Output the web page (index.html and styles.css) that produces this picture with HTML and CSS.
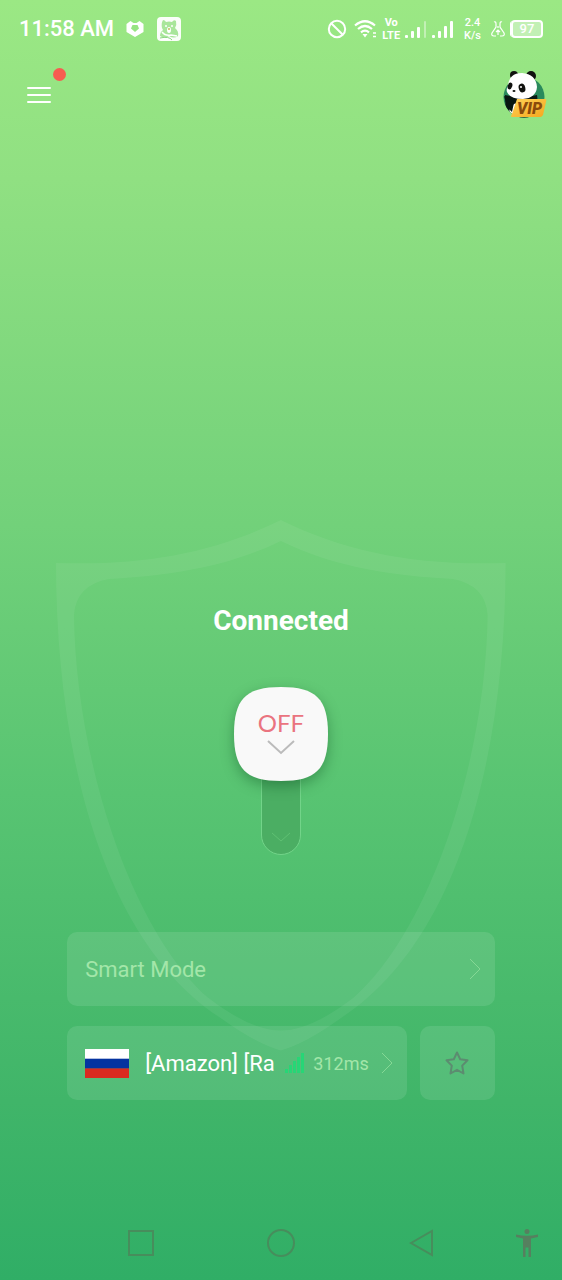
FILE: index.html
```html
<!DOCTYPE html>
<html lang="en">
  <head>
    <meta charset="UTF-8" />
    <meta name="viewport" content="width=device-width, initial-scale=1.0" />
    <title>Panda VPN</title>
    <link rel="stylesheet" href="styles.css">
  </head>
  <body>
    <div class="status-bar">
      <span class="clock">11:58 AM</span>
      <svg class="status-app" width="18" height="16" viewBox="0 0 18 16">
        <path d="M4.500 0 L7.500 2 H10.500 L13.500 0 L17.500 3 V11 L9 16 L0.500 11 V3 Z" fill="#fff" />
        <path d="M6.500 4 H11.500 L13 7.500 L9 11 L5 7.500 Z" fill="#97e482" />
      </svg>
      <svg class="status-cat" width="24" height="24" viewBox="0 0 24 24">
        <rect width="24" height="24" rx="4" fill="#fff" opacity="0.95" />
        <path d="M5 11 Q4 6 6 3 Q8 3 9 5 Q12 4 15 5 Q17 2 19 4 Q20 8 18 11 Q22 14 21 19 Q17 22 12 19 Q8 22 3 19 Q3 15 6 13 Z" fill="#a9e69b" />
        <path d="M5 15 Q8 19 14 18 L20 19 M3 22 H14" fill="none" stroke="#fff" stroke-width="1.500" />
        <path d="M3 21 Q12 19 15 23" fill="none" stroke="#8bd681" stroke-width="1" />
        <circle cx="9" cy="9" r="1" fill="#fff" />
        <circle cx="15" cy="9" r="1" fill="#fff" />
        <ellipse cx="12" cy="13" rx="2" ry="3" fill="#fff" />
        <circle cx="12" cy="12" r="1" fill="#c5bd5e" />
      </svg>

      <div class="status-right">
        <svg width="20" height="20" viewBox="0 0 20 20" fill="none" stroke="#fff" stroke-width="2">
          <circle cx="10" cy="10" r="8.200" />
          <path d="M4.200 4.200 L15.800 15.800" />
        </svg>
        <svg class="wifi" width="24" height="20" viewBox="0 0 24 20" fill="none" stroke="#fff" stroke-width="2.200">
          <path d="M1 6.500 Q11 -2 21 6.500 M4 10 Q11 4 18 10 M7 13.300 Q11 10 15 13.300" />
          <path d="M8.500 15 H13.500 L11 18.500 Z" fill="#fff" stroke="none" />
          <path d="M19 14 H22 M19 17.500 H22" stroke-width="1.300" />
        </svg>
        <span class="two-line lte"><span>Vo</span><span>LTE</span></span>
        <svg class="bars" width="22" height="18" viewBox="0 0 22 18" fill="#fff">
          <rect y="15" width="3" height="3" rx="1" />
          <rect x="6" y="11" width="3" height="7" rx="1" />
          <rect x="12" y="7" width="3" height="11" rx="1" />
          <rect x="19" y="1" width="2" height="17" rx="1" opacity="0.4" />
        </svg>
        <svg class="bars" width="22" height="18" viewBox="0 0 22 18" fill="#fff">
          <rect y="15" width="3" height="3" rx="1" />
          <rect x="6" y="11" width="3" height="7" rx="1" />
          <rect x="12" y="6" width="3" height="12" rx="1" />
          <rect x="18" y="1" width="3" height="17" rx="1" />
        </svg>
        <span class="two-line speed"><span>2.4</span><span>K/s</span></span>
        <svg class="flask" width="14" height="16" viewBox="0 0 14 16" fill="none" stroke="#fff" stroke-width="1.200">
          <path d="M3 1 Q5 0 5 3 V6 L1 12 Q0 15 3 15 H5 M11 1 Q9 0 9 3 V6 L13 12 Q14 15 11 15 H9 M7 5 V7 M5 11 L7 9 L9 11 M7 9 V14" />
        </svg>
        <div class="battery">97</div>
      </div>
    </div>

    <header class="top-bar">
      <button class="menu-btn" aria-label="Menu">
        <svg width="24" height="18" viewBox="0 0 24 18" stroke="#fff" stroke-width="2" stroke-linecap="round">
          <path d="M1 2 H23 M1 9 H23 M1 16 H23" />
        </svg>
        <span class="badge"></span>
      </button>
      <button class="vip-btn" aria-label="VIP">
        <svg width="44" height="50" viewBox="0 0 44 50">
          <defs>
            <linearGradient id="gold" x1="0" y1="0" x2="1" y2="1">
              <stop offset="0" stop-color="#ffd257" />
              <stop offset="1" stop-color="#f5a71e" />
            </linearGradient>
            <clipPath id="disc"><circle cx="21" cy="27" r="20.500" /></clipPath>
          </defs>
          <circle cx="21" cy="27" r="20.500" fill="#2a8a5c" />
          <g clip-path="url(#disc)">
            <path d="M2 25 Q12 27 19 28 L34 25 Q36 36 29 48 H3 Z" fill="#0b1713" />
            <path d="M7 38 Q11 32 15 34 L12 48 H5 Z" fill="#fff" />
            <path d="M1 26 Q7 29 12 28 L9 42 Q4 38 1 26 Z" fill="#081711" />
          </g>
          <circle cx="11" cy="5" r="4" fill="#10120f" />
          <circle cx="28" cy="6" r="5" fill="#10120f" />
          <path d="M5 16 Q6 3 19 3 Q33 4 34 17 Q33 28 20 29 Q7 29 4 22 Q3 19 5 16 Z" fill="#fff" />
          <ellipse cx="7" cy="16" rx="2.200" ry="3.500" fill="#10120f" transform="rotate(20 7 16)" />
          <ellipse cx="19" cy="18" rx="3.300" ry="4.500" fill="#10120f" transform="rotate(-15 19 18)" />
          <circle cx="18" cy="17" r="1" fill="#fff" />
          <ellipse cx="11" cy="21" rx="1.500" ry="1" fill="#10120f" />
          <path d="M14 29 H42 Q44 29 43 32 L40 45 Q39 47 37 47 H9 Q7 47 9 44 Z" fill="url(#gold)" />
          <text x="14" y="44" class="vip-text">VIP</text>
        </svg>
      </button>
    </header>

    <main class="stage">
      <svg class="shield" viewBox="0 0 450 534">
        <path fill-rule="evenodd" d="M225 0 C160 32 90 46 0 43 C0 230 45 420 164 498 Q200 524 225 531 Q250 524 286 498 C405 420 450 230 450 43 C360 46 290 32 225 0 Z
          M225 21 C170 48 110 56 53 59 Q20 65 18 95 C20 240 75 410 152 478 Q195 511 225 511 Q255 511 298 478 C375 410 430 240 432 95 Q430 65 397 59 C340 56 280 48 225 21 Z" />
      </svg>

      <h1 class="state">Connected</h1>

      <div class="switch">
        <button class="knob">
          <svg class="knob-shape" width="94" height="94" viewBox="0 0 94 94">
            <path d="M47 0 C82 0 94 12 94 47 C94 82 82 94 47 94 C12 94 0 82 0 47 C0 12 12 0 47 0 Z" fill="#f9f9f9" />
          </svg>
          <span class="knob-label">OFF</span>
          <svg class="knob-arrow" width="28" height="16" viewBox="0 0 28 16" fill="none" stroke="#bbb" stroke-width="2">
            <path d="M1 2 L14 14 L27 2" />
          </svg>
        </button>
        <div class="track">
          <svg width="20" height="10" viewBox="0 0 20 10" fill="none" stroke="#5fc173" stroke-width="1">
            <path d="M1 1 L10 9 L19 1" />
          </svg>
        </div>
      </div>

      <div class="cards">
        <button class="card mode">
          <span>Smart Mode</span>
          <svg class="chevron" width="12" height="22" viewBox="0 0 12 22"><path d="M1 1 L11 11 L1 21" /></svg>
        </button>
        <div class="row">
          <button class="card server">
            <svg class="flag" width="44" height="29" viewBox="0 0 44 29">
              <rect width="44" height="10" fill="#fff" />
              <rect y="9.700" width="44" height="10" fill="#0433a0" />
              <rect y="19.400" width="44" height="9.600" fill="#d92a20" />
            </svg>
            <span class="server-name">[Amazon] [Ra</span>
            <svg class="signal" width="20" height="22" viewBox="0 0 20 22" fill="#27d676">
              <rect y="17" width="3" height="4" />
              <rect x="4" y="13" width="3" height="8" />
              <rect x="8" y="9" width="3" height="12" />
              <rect x="12" y="5" width="3" height="16" />
              <rect x="16" y="1" width="3" height="20" />
            </svg>
            <span class="ping">312ms</span>
            <svg class="chevron" width="12" height="22" viewBox="0 0 12 22"><path d="M1 1 L11 11 L1 21" /></svg>
          </button>
          <button class="card favorite" aria-label="Favorite">
            <svg width="24" height="24" viewBox="0 0 24 24" fill="none" stroke="#5c8c70" stroke-width="2" stroke-linejoin="round">
              <path d="M12 1.500 L15.200 8.300 L22.500 9.300 L17.200 14.600 L18.500 22.500 L12 18.800 L5.500 22.500 L6.800 14.600 L1.500 9.300 L8.800 8.300 Z" />
            </svg>
          </button>
        </div>
      </div>
    </main>

    <nav class="nav-bar">
      <button class="nav-recent" aria-label="Recent apps">
        <svg width="28" height="28" viewBox="0 0 28 28"><rect x="2" y="2" width="24" height="24" /></svg>
      </button>
      <button aria-label="Home">
        <svg width="28" height="28" viewBox="0 0 28 28"><circle cx="14" cy="14" r="13" /></svg>
      </button>
      <button aria-label="Back">
        <svg width="28" height="28" viewBox="0 0 28 28"><path d="M3 14 L24 2 V26 Z" /></svg>
      </button>
      <button aria-label="Accessibility">
        <svg class="person" width="24" height="28" viewBox="0 0 24 28">
          <circle cx="12" cy="2.500" r="2.500" />
          <path d="M1 5.500 Q12 8 23 5.500 V8 L16 9.500 V28 H13.500 V18.500 H10.500 V28 H8 V9.500 L1 8 Z" />
        </svg>
      </button>
    </nav>
  </body>
</html>
```
FILE: styles.css
```css
* {
  box-sizing: border-box;
}
body {
  margin: 0;
  min-height: 100vh;
  display: flex;
  flex-direction: column;
  font-family: Roboto, "Liberation Sans", sans-serif;
  color: #fff;
  background: linear-gradient(#9be884 0%, #90e082 14%, #72d17a 41%, #58c472 62%, #40b569 86%, #30ae66 100%);
}
button {
  padding: 0;
  border: none;
  background: none;
  color: inherit;
  font: inherit;
  cursor: pointer;
}
svg {
  display: block;
  flex-shrink: 0;
}

/* status bar */
.status-bar {
  display: flex;
  align-items: center;
  height: 58px;
  padding: 0 19px;
}
.clock {
  font-size: 22px;
  font-weight: 500;
  line-height: 28px;
  white-space: nowrap;
}
.status-app {
  margin-left: 12px;
}
.status-cat {
  margin-left: 13px;
}
.status-right {
  display: flex;
  align-items: center;
  margin-left: auto;
}
.wifi {
  margin-left: 7px;
}
.two-line {
  display: flex;
  flex-direction: column;
  font-weight: 700;
  font-size: 11px;
  line-height: 13px;
  text-align: center;
}
.lte {
  margin-left: 4px;
}
.bars {
  margin-left: 5px;
}
.speed {
  margin-left: 10px;
  font-weight: 500;
}
.flask {
  margin-left: 10px;
}
.battery {
  width: 32px;
  height: 18px;
  margin-left: 6px;
  border: 2px solid #fff;
  border-radius: 4px;
  background: rgba(255, 255, 255, 0.4);
  font-size: 13px;
  font-weight: 500;
  line-height: 14px;
  text-align: center;
  box-shadow: -2px 0 0 -1px #fff;
}

/* menu and vip */
.top-bar {
  display: flex;
  justify-content: space-between;
  align-items: center;
  height: 74px;
  padding: 0 15px 0 27px;
}
.menu-btn {
  position: relative;
}
.badge {
  position: absolute;
  top: -18px;
  right: -15px;
  width: 13px;
  height: 13px;
  border-radius: 50%;
  background: #f75c50;
}
.vip-text {
  font: italic 900 16px Roboto, sans-serif;
  fill: #8a4a0c;
}

/* connection state */
.stage {
  position: relative;
  width: 80%;
  margin: auto auto 0;
  padding: 85px 11px 0;
}
.shield {
  position: absolute;
  top: 0;
  left: 0;
  width: 100%;
  fill: rgba(255, 255, 255, 0.06);
}
.state {
  margin: 0 0 50px;
  font-size: 28px;
  font-weight: 700;
  line-height: 32px;
  text-align: center;
}
.switch {
  position: relative;
  display: flex;
  flex-direction: column;
  align-items: center;
  margin-bottom: 77px;
}
.knob {
  position: relative;
  z-index: 1;
  display: flex;
  flex-direction: column;
  align-items: center;
  width: 94px;
  height: 94px;
  padding-top: 22px;
}
.knob-shape {
  position: absolute;
  top: 0;
  left: 0;
  z-index: -1;
  overflow: visible;
  filter: drop-shadow(0 5px 7px rgba(0, 60, 20, 0.35));
}
.knob-label {
  font-family: Lato, sans-serif;
  font-size: 24px;
  line-height: 28px;
  color: #ea7480;
}
.knob-arrow {
  margin-top: 2px;
}
.track {
  display: flex;
  align-items: flex-end;
  justify-content: center;
  width: 40px;
  height: 104px;
  margin-top: -30px;
  padding-bottom: 12px;
  border: 1px solid #72d489;
  border-radius: 20px;
  background: #4bae63;
}

/* cards */
.cards {
  display: flex;
  flex-direction: column;
  gap: 20px;
  position: relative;
}
.card {
  display: flex;
  align-items: center;
  height: 74px;
  padding: 0 14px 0 18px;
  border-radius: 10px;
  background: rgba(255, 255, 255, 0.1);
}
.mode {
  justify-content: space-between;
  font-size: 22px;
  color: #a3e6a9;
}
.row {
  display: flex;
  gap: 13px;
}
.server {
  flex: 1;
  min-width: 0;
}
.server-name {
  flex: 1;
  min-width: 0;
  margin: 0 8px 0 16px;
  overflow: hidden;
  font-size: 22px;
  text-align: left;
  white-space: nowrap;
}
.ping {
  margin: 0 12px 0 8px;
  font-size: 18px;
  color: #a3e6a9;
}
.chevron {
  fill: none;
  stroke: #85d895;
  stroke-width: 1;
}
.favorite {
  justify-content: center;
  width: 75px;
  padding: 0;
}

/* system navigation */
.nav-bar {
  display: grid;
  grid-template-columns: 1fr 2fr 2fr 2fr 1fr;
  align-items: center;
  height: 74px;
  margin-top: 106px;
}
.nav-bar button {
  display: flex;
  justify-content: center;
}
.nav-recent {
  grid-column-start: 2;
}
.nav-bar svg {
  fill: none;
  stroke: #478d5c;
  stroke-width: 2;
}
.nav-bar .person {
  fill: #56805f;
  stroke: none;
}
```
